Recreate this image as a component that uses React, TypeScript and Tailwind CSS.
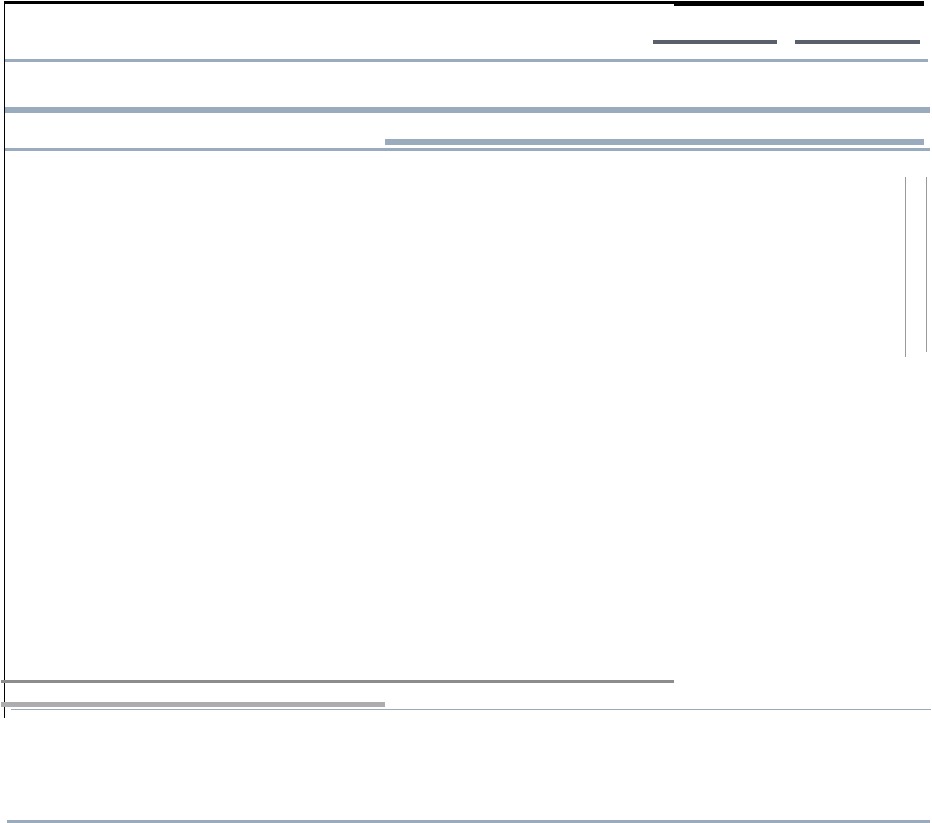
export default function App() {
    return (
        <div className="w-[932px] h-[823px] bg-white overflow-hidden font-['Liberation_Sans',sans-serif]">
            {/* Frame with left rule */}
            <div className="ml-[4px] mt-[1px] h-[717px] border-l border-black flex flex-col items-start">
                {/* Top rule */}
                <div className="flex items-start">
                    <div className="w-[669px] h-[3px] bg-black"></div>
                    <div className="w-[250px] h-[5px] bg-black"></div>
                </div>

                {/* Header actions */}
                <div className="mt-[34px] ml-[648px] flex gap-[18px]">
                    <div className="w-[124px] h-[4px] bg-[#5a606b]"></div>
                    <div className="w-[125px] h-[4px] bg-[#5a606b]"></div>
                </div>

                <div className="mt-[15px] w-[923px] h-[3px] bg-[#9aabbd]"></div>
                <div className="mt-[45px] w-[925px] h-[6px] bg-[#9aabbd]"></div>
                <div className="mt-[26px] ml-[380px] w-[539px] h-[6px] bg-[#9aabbd]"></div>
                <div className="mt-[3px] w-[925px] h-[3px] bg-[#9aabbd]"></div>

                {/* Scroll track */}
                <div className="mt-[26px] ml-[900px] flex items-start gap-[20px]">
                    <div className="w-px h-[180px] bg-[#9a9a9a]"></div>
                    <div className="w-px h-[175px] bg-[#9a9a9a]"></div>
                </div>

                {/* Footer rules */}
                <div className="mt-[323px] -ml-[4px] w-[673px] h-[3px] bg-[#8c8c8c]"></div>
                <div className="mt-[19px] -ml-[4px] w-[384px] h-[5px] bg-[#adadb0]"></div>
                <div className="mt-[2px] ml-[6px] w-[920px] h-px bg-[#9aabbd]"></div>
            </div>

            <div className="mt-[102px] ml-[7px] w-[923px] h-[3px] bg-[#9aabbd]"></div>
        </div>
    );
}
